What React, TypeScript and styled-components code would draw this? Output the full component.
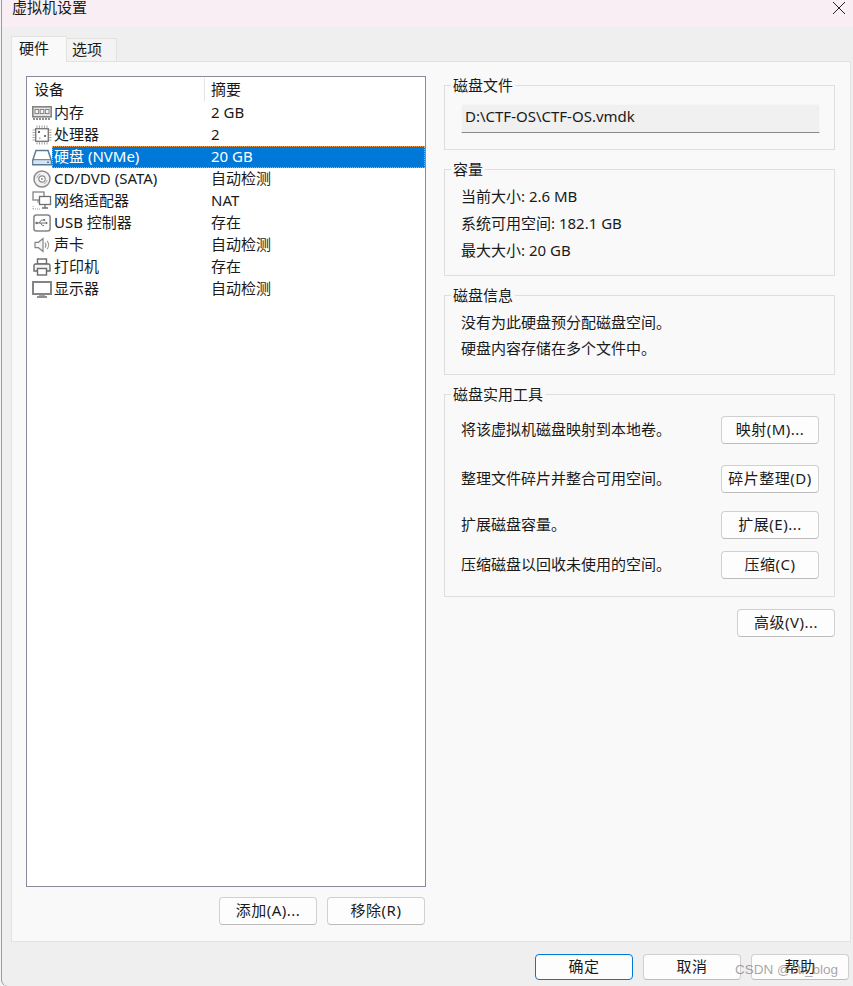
import React from "react";
import styled, { createGlobalStyle } from "styled-components";

const GlobalStyle = createGlobalStyle`
  html, body {
    margin: 0;
    padding: 0;
    background: #f3f3f3;
  }
  body {
    font-family: "Noto Sans", "Noto Sans CJK SC", sans-serif;
    font-size: 15px;
    color: #1a1a1a;
  }
`;

const IconMemory = () => (
  <svg width="20" height="15" viewBox="0 0 20 15" fill="none">
    <rect x="0.8" y="0.8" width="18.4" height="10" fill="#e4e4e4" stroke="#858585" strokeWidth="1.6" />
    <rect x="3" y="3.5" width="3.6" height="4" fill="#f6f6f6" stroke="#858585" />
    <rect x="8.2" y="3.5" width="3.6" height="4" fill="#f6f6f6" stroke="#858585" />
    <rect x="13.4" y="3.5" width="3.6" height="4" fill="#f6f6f6" stroke="#858585" />
    <path d="M1 13h18" stroke="#8f8f8f" strokeWidth="2" strokeDasharray="2 1" />
  </svg>
);

const IconCpu = () => (
  <svg width="20" height="20" viewBox="0 0 20 20" fill="none">
    <rect x="3.7" y="3.7" width="12.6" height="12.6" fill="#fff" stroke="#7d7d7d" strokeWidth="1.4" />
    <path d="M5 0.5v2.4M7.5 0.5v2.4M10 0.5v2.4M12.5 0.5v2.4M15 0.5v2.4M5 17.1v2.4M7.5 17.1v2.4M10 17.1v2.4M12.5 17.1v2.4M15 17.1v2.4M0.5 5h2.4M0.5 7.5h2.4M0.5 10h2.4M0.5 12.5h2.4M0.5 15h2.4M17.1 5h2.4M17.1 7.5h2.4M17.1 10h2.4M17.1 12.5h2.4M17.1 15h2.4" stroke="#a3a3a3" />
    <rect x="6" y="6" width="2" height="2" fill="#666" />
    <rect x="12" y="10" width="2" height="2" fill="#777" />
    <rect x="7" y="12.5" width="1.5" height="1.5" fill="#aaa" />
  </svg>
);

const IconDisk = () => (
  <svg width="20" height="17" viewBox="0 0 20 17" fill="none">
    <path d="M4 1.5h12l3.2 9.5v4.7H0.8V11z" fill="#fff" stroke="#5d7a94" strokeWidth="1.5" />
    <path d="M1 10.8h18" stroke="#5d7a94" strokeWidth="1.3" />
    <rect x="1.6" y="11.6" width="16.8" height="3.4" fill="#d3e4f2" />
    <rect x="15" y="12.6" width="2" height="1.4" fill="#5d7a94" />
  </svg>
);

const IconDisc = () => (
  <svg width="18" height="18" viewBox="0 0 18 18" fill="none">
    <circle cx="9" cy="9" r="8" fill="#f2f2f2" stroke="#8a8a8a" strokeWidth="1.5" />
    <circle cx="9" cy="9" r="3.2" fill="#fff" stroke="#8a8a8a" strokeWidth="1.2" />
    <circle cx="9" cy="9" r="1" fill="#8a8a8a" />
    <path d="M3.8 8a5.4 5.4 0 0 1 3.4-4M10.8 14a5.4 5.4 0 0 0 3.4-4" stroke="#b0b0b0" />
  </svg>
);

const IconNetwork = () => (
  <svg width="20" height="20" viewBox="0 0 20 20" fill="none">
    <rect x="1" y="1" width="11" height="8" fill="#fff" stroke="#858585" strokeWidth="1.3" />
    <path d="M6 9v3" stroke="#858585" />
    <rect x="7.5" y="5.5" width="11" height="8" fill="#fff" stroke="#6f6f6f" strokeWidth="1.3" />
    <path d="M13 13.5v3M10 17h6" stroke="#6f6f6f" strokeWidth="1.3" />
    <path d="M1 18h7M1 15v3" stroke="#a0a0a0" strokeDasharray="1 1" />
  </svg>
);

const IconUsb = () => (
  <svg width="18" height="18" viewBox="0 0 18 18" fill="none">
    <rect x="0.9" y="0.9" width="16.2" height="16.2" rx="2.5" fill="#fff" stroke="#858585" strokeWidth="1.5" />
    <path d="M3.5 9h10M6 9l2.5-3h2M7.5 9l2 2.6h1.6" stroke="#6f6f6f" />
    <path d="M15 9l-2.2-1.5v3z" fill="#6f6f6f" />
    <rect x="10.3" y="5" width="1.9" height="1.9" fill="#6f6f6f" />
    <circle cx="3.6" cy="9" r="1.3" fill="#6f6f6f" />
  </svg>
);

const IconSpeaker = () => (
  <svg width="16" height="16" viewBox="0 0 16 16" fill="none">
    <path d="M1 5.3h3.4L9 1.5v13l-4.6-3.8H1z" fill="#f6f6f6" stroke="#858585" strokeWidth="1.2" />
    <path d="M11 5.5a4 4 0 0 1 0 5M13 3.8a6.4 6.4 0 0 1 0 8.4" stroke="#9a9a9a" strokeWidth="1.2" />
  </svg>
);

const IconPrinter = () => (
  <svg width="18" height="18" viewBox="0 0 18 18" fill="none">
    <rect x="4.5" y="1" width="9" height="5" fill="#fff" stroke="#6a6a6a" strokeWidth="1.4" />
    <path d="M4 13H1V7.5A1.5 1.5 0 0 1 2.5 6h13A1.5 1.5 0 0 1 17 7.5V13h-3" fill="#f4f4f4" stroke="#6a6a6a" strokeWidth="1.4" />
    <rect x="4.5" y="10.5" width="9" height="6.5" fill="#fff" stroke="#6a6a6a" strokeWidth="1.4" />
  </svg>
);

const IconMonitor = () => (
  <svg width="20" height="17" viewBox="0 0 20 17" fill="none">
    <rect x="1" y="1" width="18" height="12" fill="#fff" stroke="#858585" strokeWidth="2" />
    <path d="M7 14.5h6" stroke="#a5a5a5" strokeWidth="1.4" />
    <path d="M5 16h10" stroke="#858585" strokeWidth="1.8" />
  </svg>
);

const devices = [
  { icon: <IconMemory />, name: "内存", summary: "2 GB" },
  { icon: <IconCpu />, name: "处理器", summary: "2" },
  { icon: <IconDisk />, name: "硬盘 (NVMe)", summary: "20 GB", selected: true },
  { icon: <IconDisc />, name: "CD/DVD (SATA)", summary: "自动检测" },
  { icon: <IconNetwork />, name: "网络适配器", summary: "NAT" },
  { icon: <IconUsb />, name: "USB 控制器", summary: "存在" },
  { icon: <IconSpeaker />, name: "声卡", summary: "自动检测" },
  { icon: <IconPrinter />, name: "打印机", summary: "存在" },
  { icon: <IconMonitor />, name: "显示器", summary: "自动检测" },
];

const tools = [
  { text: "将该虚拟机磁盘映射到本地卷。", button: "映射(M)...", gap: 0 },
  { text: "整理文件碎片并整合可用空间。", button: "碎片整理(D)", gap: 21 },
  { text: "扩展磁盘容量。", button: "扩展(E)...", gap: 18 },
  { text: "压缩磁盘以回收未使用的空间。", button: "压缩(C)", gap: 12 },
];

export default function App() {
  return (
    <>
      <GlobalStyle />
      <Dialog>
        <TitleBar>
          <span>虚拟机设置</span>
          <svg width="14" height="14" viewBox="0 0 14 14" fill="none">
            <path d="M1 1l12 12M13 1L1 13" stroke="#222" strokeWidth="1" />
          </svg>
        </TitleBar>
        <Body>
          <Tabs>
            <Tab $active>硬件</Tab>
            <Tab>选项</Tab>
          </Tabs>
          <Panel>
            <LeftColumn>
              <DeviceList>
                <ListHeader>
                  <HeadCell $width={178}>设备</HeadCell>
                  <HeadCell>摘要</HeadCell>
                </ListHeader>
                {devices.map((d) => (
                  <DeviceRow key={d.name}>
                    <IconSlot>{d.icon}</IconSlot>
                    <RowBody $selected={d.selected}>
                      <DeviceName>{d.name}</DeviceName>
                      <span>{d.summary}</span>
                    </RowBody>
                  </DeviceRow>
                ))}
              </DeviceList>
              <ListButtons>
                <Button>添加(A)...</Button>
                <Button>移除(R)</Button>
              </ListButtons>
            </LeftColumn>
            <RightColumn>
              <Group $height={65}>
                <Legend>磁盘文件</Legend>
                <FileField>D:\CTF-OS\CTF-OS.vmdk</FileField>
              </Group>
              <Group $height={107}>
                <Legend>容量</Legend>
                <InfoLines $top={16} $gap={7}>
                  <div>当前大小: 2.6 MB</div>
                  <div>系统可用空间: 182.1 GB</div>
                  <div>最大大小: 20 GB</div>
                </InfoLines>
              </Group>
              <Group $height={80}>
                <Legend>磁盘信息</Legend>
                <InfoLines $top={16} $gap={6}>
                  <div>没有为此硬盘预分配磁盘空间。</div>
                  <div>硬盘内容存储在多个文件中。</div>
                </InfoLines>
              </Group>
              <Group $height={203}>
                <Legend>磁盘实用工具</Legend>
                <ToolList>
                  {tools.map((t) => (
                    <ToolRow key={t.button} $gap={t.gap}>
                      <ToolText>{t.text}</ToolText>
                      <Button>{t.button}</Button>
                    </ToolRow>
                  ))}
                </ToolList>
              </Group>
              <AdvancedRow>
                <Button>高级(V)...</Button>
              </AdvancedRow>
            </RightColumn>
          </Panel>
          <Footer>
            <Button $primary>确定</Button>
            <Button>取消</Button>
            <Button>帮助</Button>
          </Footer>
        </Body>
        <Watermark>CSDN @ctf_blog</Watermark>
      </Dialog>
    </>
  );
}

const Dialog = styled.div`
  position: relative;
  width: 851px;
  height: 986px;
  margin-left: 2px;
  overflow: hidden;
  display: flex;
  flex-direction: column;
  background: #efefef;
  border-bottom-left-radius: 6px;
  box-shadow: -1px 0 0 #9c9c9c;
`;

const TitleBar = styled.div`
  height: 27px;
  flex: none;
  display: flex;
  align-items: flex-start;
  justify-content: space-between;
  padding: 0 7px 0 10px;
  background: #f9eef3;
  font-size: 15px;
  line-height: 15px;

  svg {
    margin-top: 1px;
  }
`;

const Body = styled.div`
  flex: 1;
  display: flex;
  flex-direction: column;
  padding: 9px 2px 0 9px;
`;

const Tabs = styled.div`
  display: flex;
  align-items: flex-end;
  height: 25px;
  flex: none;
`;

const Tab = styled.div<{ $active?: boolean }>`
  position: relative;
  top: 1px;
  box-sizing: border-box;
  width: ${(p) => (p.$active ? 56 : 50)}px;
  height: ${(p) => (p.$active ? 26 : 24)}px;
  display: flex;
  align-items: center;
  padding-left: ${(p) => (p.$active ? 7 : 5)}px;
  padding-bottom: ${(p) => (p.$active ? 5 : 3)}px;
  background: ${(p) => (p.$active ? "#f9f9f9" : "#f3f3f3")};
  border: 1px solid #e2e2e2;
  border-bottom: ${(p) => (p.$active ? "0" : "1px solid #e2e2e2")};
  border-left-width: ${(p) => (p.$active ? 1 : 0)}px;
  z-index: ${(p) => (p.$active ? 1 : 0)};
`;

const Panel = styled.div`
  box-sizing: border-box;
  height: 881px;
  flex: none;
  display: flex;
  gap: 18px;
  padding: 14px 13px 0 14px;
  background: #f9f9f9;
  border: 1px solid #e2e2e2;
`;

const LeftColumn = styled.div`
  width: 400px;
  flex: none;
  display: flex;
  flex-direction: column;
`;

const DeviceList = styled.div`
  box-sizing: border-box;
  height: 811px;
  flex: none;
  background: #fff;
  border: 1px solid #8a8a9a;
`;

const ListHeader = styled.div`
  height: 25px;
  display: flex;
  align-items: center;
`;

const HeadCell = styled.div<{ $width?: number }>`
  box-sizing: border-box;
  width: ${(p) => (p.$width ? `${p.$width}px` : "auto")};
  height: 24px;
  line-height: 23px;
  padding-left: ${(p) => (p.$width ? 7 : 6)}px;
  border-right: ${(p) => (p.$width ? "1px solid #e5e5e5" : "0")};
`;

const DeviceRow = styled.div`
  height: 22px;
  display: flex;
  align-items: center;
`;

const IconSlot = styled.div`
  width: 20px;
  flex: none;
  padding-left: 5px;
  display: flex;
  justify-content: center;
  align-items: center;
`;

const RowBody = styled.div<{ $selected?: boolean }>`
  flex: 1;
  box-sizing: border-box;
  height: 22px;
  display: flex;
  align-items: center;
  padding: 0 0 3px 2px;
  color: ${(p) => (p.$selected ? "#fff" : "inherit")};
  background: ${(p) => (p.$selected ? "#0078d7" : "transparent")};
  outline: ${(p) => (p.$selected ? "1px dotted #f0a050" : "none")};
  outline-offset: -1px;
`;

const DeviceName = styled.span`
  width: 157px;
  flex: none;
`;

const ListButtons = styled.div`
  display: flex;
  justify-content: flex-end;
  gap: 10px;
  margin-top: 10px;
  padding-right: 1px;
`;

const Button = styled.button<{ $primary?: boolean }>`
  box-sizing: border-box;
  width: 98px;
  height: 28px;
  flex: none;
  padding: 0 0 3px;
  background: #fdfdfd;
  border: 1px solid ${(p) => (p.$primary ? "#0078d4" : "#d0d0d0")};
  border-bottom-color: ${(p) => (p.$primary ? "#0078d4" : "#bcbcbc")};
  border-radius: 4px;
  font-family: inherit;
  font-size: 15px;
  letter-spacing: 0.5px;
  color: #1a1a1a;
`;

const RightColumn = styled.div`
  width: 391px;
  flex: none;
  display: flex;
  flex-direction: column;
  gap: 19px;
  padding-top: 9px;
`;

const Group = styled.div<{ $height: number }>`
  position: relative;
  box-sizing: border-box;
  height: ${(p) => p.$height}px;
  flex: none;
  padding: 0 15px 0 16px;
  border: 1px solid #dedede;
`;

const Legend = styled.div`
  position: absolute;
  top: -11px;
  left: 6px;
  padding: 0 2px;
  height: 20px;
  line-height: 20px;
  background: #f9f9f9;
`;

const FileField = styled.div`
  box-sizing: border-box;
  height: 29px;
  margin: 18px -1px 0 0;
  padding-left: 3px;
  line-height: 22px;
  background: #f0f0f0;
  border: 1px solid #f6f6f6;
  border-bottom: 1px solid #8a8a8a;
  border-radius: 2px 2px 0 0;
`;

const InfoLines = styled.div<{ $top: number; $gap: number }>`
  display: flex;
  flex-direction: column;
  gap: ${(p) => p.$gap}px;
  padding-top: ${(p) => p.$top}px;
  line-height: 20px;
`;

const ToolList = styled.div`
  display: flex;
  flex-direction: column;
  padding-top: 21px;
`;

const ToolRow = styled.div<{ $gap: number }>`
  display: flex;
  align-items: center;
  justify-content: space-between;
  margin-top: ${(p) => p.$gap}px;
`;

const ToolText = styled.span`
  padding-bottom: 4px;
`;

const AdvancedRow = styled.div`
  display: flex;
  justify-content: flex-end;
  margin-top: -7px;
`;

const Footer = styled.div`
  display: flex;
  justify-content: flex-end;
  gap: 10px;
  padding: 12px 2px 0 0;

  ${Button} {
    height: 26px;
  }
`;

const Watermark = styled.div`
  position: absolute;
  right: 15px;
  bottom: 9px;
  font-family: "Liberation Sans", sans-serif;
  font-size: 13.5px;
  color: rgba(90, 90, 90, 0.55);
`;
